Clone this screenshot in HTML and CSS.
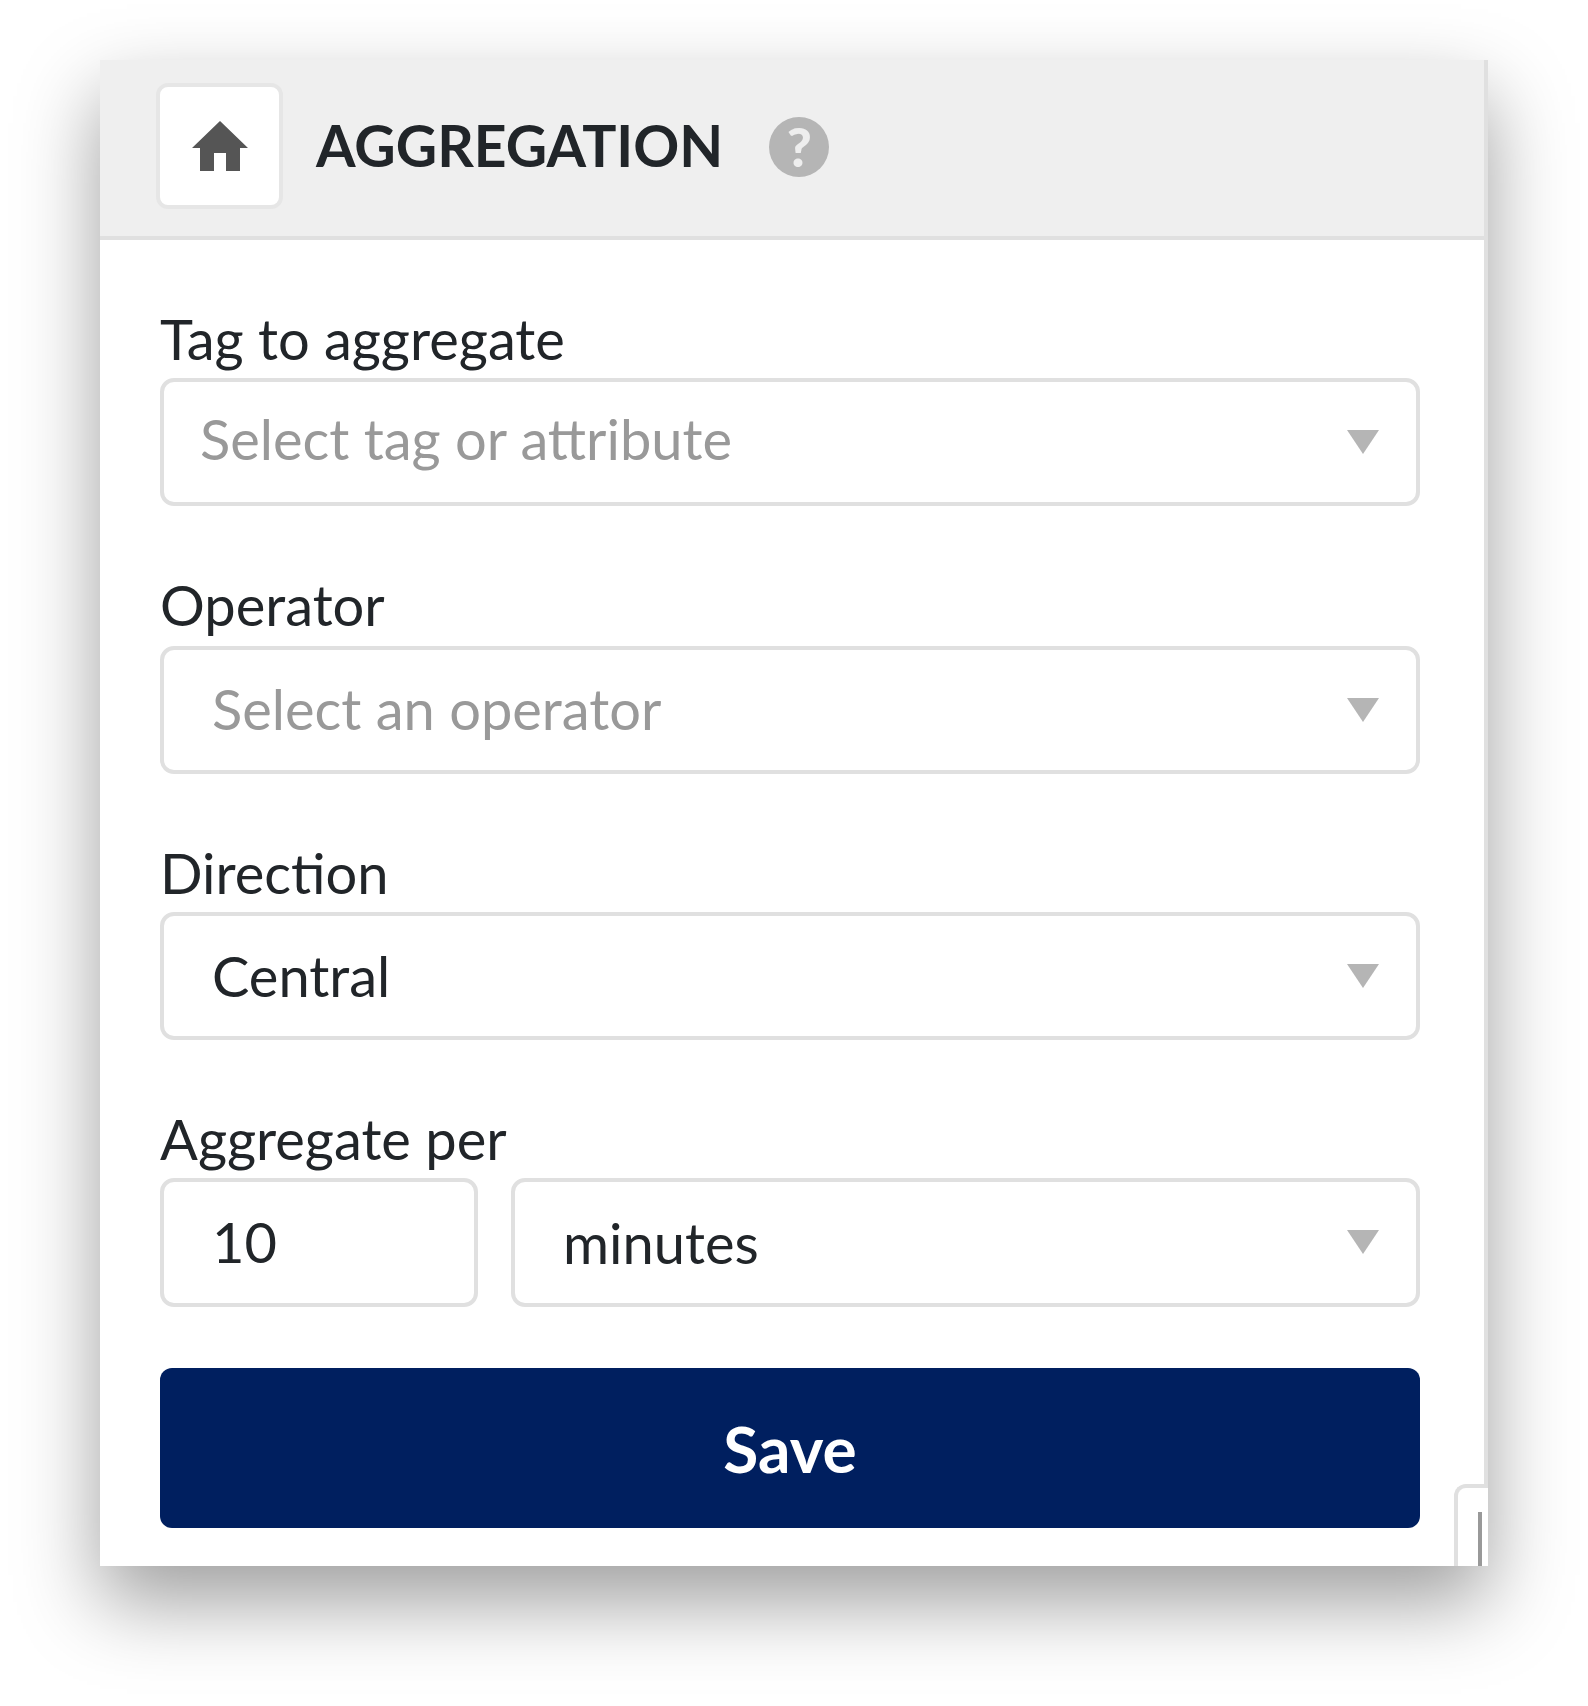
FILE: index.html
```html
<!DOCTYPE html>
<html lang="en">
<head>
    <meta charset="UTF-8">
    <title>Aggregation</title>
    <link rel="stylesheet" href="styles.css">
</head>
<body>
    <div class="panel">
        <div class="panel-header">
            <button class="home-button">
                <svg class="home-icon" viewBox="0 0 56 50"><path d="M28 0 L56 27 H48 V50 H34 V32 H22 V50 H8 V27 H0 Z"/></svg>
            </button>
            <h1>AGGREGATION</h1>
            <span class="help-icon">?</span>
        </div>
        <div class="panel-body">
            <div class="field-group tag-group">
                <label>Tag to aggregate</label>
                <div class="select placeholder first">Select tag or attribute<span class="caret"></span></div>
            </div>
            <div class="field-group operator-group">
                <label>Operator</label>
                <div class="select placeholder">Select an operator<span class="caret"></span></div>
            </div>
            <div class="field-group">
                <label>Direction</label>
                <div class="select">Central<span class="caret"></span></div>
            </div>
            <div class="field-group">
                <label>Aggregate per</label>
                <div class="field-row">
                    <div class="number-input">10</div>
                    <div class="select unit">minutes<span class="caret"></span></div>
                </div>
            </div>
            <button class="save-button">Save</button>
            <div class="corner-tab"></div>
        </div>
    </div>
</body>
</html>
```

FILE: styles.css
```css
html, body {
    height: 100%;
}
body {
    margin: 0;
    padding: 60px 0 0 100px;
    box-sizing: border-box;
    background: #fff;
    font-family: Lato, "Open Sans", sans-serif;
    color: #212529;
}
.panel {
    width: 1388px;
    height: 1506px;
    background: #fff;
    box-shadow: 0 36px 76px rgba(0, 0, 0, 0.38);
    overflow: hidden;
    display: flex;
    flex-direction: column;
}
.panel-header {
    height: 176px;
    background: #efefef;
    border-bottom: 4px solid #e0e0e0;
    border-right: 4px solid #e0e0e0;
    display: flex;
    align-items: center;
    padding-left: 56px;
}
.home-button {
    width: 127px;
    height: 126px;
    margin-top: -4px;
    padding: 0;
    background: #fff;
    border: 4px solid #e6e6e6;
    border-radius: 12px;
    display: flex;
    align-items: center;
    justify-content: center;
}
.home-icon {
    width: 56px;
    height: 50px;
    fill: #555;
}
.panel-header h1 {
    margin: -6px 0 0 33px;
    font-size: 57px;
    font-weight: 700;
    line-height: 66px;
}
.help-icon {
    width: 60px;
    height: 60px;
    margin: -2px 0 0 46px;
    border-radius: 50%;
    background: #b5b5b5;
    color: #eee;
    font-size: 54px;
    font-weight: 900;
    line-height: 60px;
    text-align: center;
}
.panel-body {
    position: relative;
    flex: 1;
    padding: 72px 64px 0 60px;
    border-right: 4px solid #e0e0e0;
}
.field-group {
    margin-bottom: 72px;
}
.tag-group {
    margin-bottom: 74px;
}
.field-group label {
    display: block;
    height: 66px;
    font-size: 56px;
    line-height: 54px;
}
.operator-group label {
    line-height: 50px;
}
.select, .number-input {
    position: relative;
    box-sizing: border-box;
    height: 128px;
    padding-left: 48px;
    background: #fff;
    border: 4px solid #e0e0e0;
    border-radius: 14px;
    font-size: 56px;
    line-height: 120px;
}
.select.placeholder {
    color: #999;
}
.operator-group .select {
    line-height: 118px;
}
.select.first {
    padding-left: 36px;
    line-height: 114px;
}
.caret {
    position: absolute;
    top: 48px;
    right: 37px;
    border-top: 24px solid #b5b5b5;
    border-left: 16px solid transparent;
    border-right: 16px solid transparent;
}
.field-row {
    display: flex;
    gap: 33px;
}
.field-row .select, .field-row .number-input {
    height: 129px;
}
.number-input {
    width: 318px;
}
.select.unit {
    flex: 1;
    line-height: 122px;
}
.save-button {
    display: block;
    width: 100%;
    height: 160px;
    margin-top: -11px;
    background: #001f5f;
    border: none;
    border-radius: 12px;
    color: #fff;
    font-family: inherit;
    font-size: 64px;
    font-weight: 700;
}
.corner-tab {
    position: absolute;
    right: -4px;
    bottom: -40px;
    width: 30px;
    height: 114px;
    background: #fff;
    border: 4px solid #e0e0e0;
    border-right: none;
    border-radius: 12px 0 0 0;
}
.corner-tab::after {
    content: "";
    position: absolute;
    top: 24px;
    left: 20px;
    width: 4px;
    height: 60px;
    background: #999;
}
```
